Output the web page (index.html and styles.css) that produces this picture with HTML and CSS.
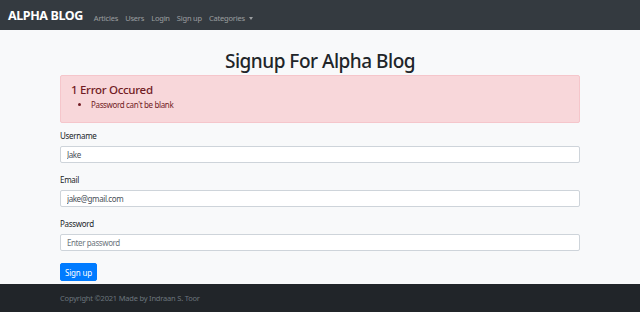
FILE: index.html
```html
<!DOCTYPE html>
<html lang="en">
<head>
<meta charset="utf-8">
<title>Signup For Alpha Blog</title>
<link rel="stylesheet" href="styles.css">
</head>
<body>
<nav class="navbar">
  <a class="brand" href="#">ALPHA BLOG</a>
  <ul class="nav-links">
    <li><a href="#">Articles</a></li>
    <li><a href="#">Users</a></li>
    <li><a href="#">Login</a></li>
    <li><a href="#">Sign up</a></li>
    <li><a href="#" class="dropdown">Categories <span class="caret"></span></a></li>
  </ul>
</nav>
<main class="main">
  <h1 class="title">Signup For Alpha Blog</h1>
  <div class="container">
    <div class="alert">
      <h4 class="alert-heading">1 Error Occured</h4>
      <ul class="errors">
        <li>Password can't be blank</li>
      </ul>
    </div>
    <form class="form">
      <div class="group">
        <label for="u">Username</label>
        <input id="u" type="text" value="Jake">
      </div>
      <div class="group">
        <label for="e">Email</label>
        <input id="e" type="email" value="jake@gmail.com">
      </div>
      <div class="group">
        <label for="p">Password</label>
        <input id="p" type="password" placeholder="Enter password">
      </div>
      <button type="button" class="btn">Sign up</button>
    </form>
  </div>
</main>
<footer class="footer">
  <div class="container">Copyright ©2021 Made by Indraan S. Toor</div>
</footer>
</body>
</html>
```
FILE: styles.css
```css
* { box-sizing: border-box; }
html, body { margin: 0; padding: 0; }
body {
  background: #f8f9fa;
  font-family: "Noto Sans", "Open Sans", sans-serif;
  color: #212529;
  height: 312px;
  display: flex;
  flex-direction: column;
}
a { text-decoration: none; }

.navbar {
  background: #343a40;
  height: 30px;
  display: flex;
  align-items: center;
  padding: 0 8px;
}
.brand {
  color: #fff;
  font-weight: 700;
  font-size: 12.5px;
  letter-spacing: -0.4px;
  margin-right: 11px;
}
.nav-links {
  list-style: none;
  margin: 0;
  padding: 0;
  display: flex;
  gap: 7px;
}
.nav-links a {
  color: rgba(255, 255, 255, 0.5);
  font-size: 7.5px;
  letter-spacing: -0.2px;
}
.caret {
  display: inline-block;
  width: 0;
  height: 0;
  margin-left: 2px;
  vertical-align: 1px;
  border-top: 3px solid rgba(255, 255, 255, 0.5);
  border-left: 2.5px solid transparent;
  border-right: 2.5px solid transparent;
}

.main { flex: 1; }
.title {
  margin: 18px 0 1px;
  text-align: center;
  font-size: 19px;
  line-height: 26px;
  font-weight: 500;
  letter-spacing: -0.5px;
}
.container {
  width: 520px;
  margin: 0 auto;
}
.alert {
  background: #f8d7da;
  border: 1px solid #f5c6cb;
  border-radius: 2px;
  color: #721c24;
  height: 48px;
  padding: 6px 10px;
}
.alert-heading {
  margin: 0 0 2px;
  font-size: 11.5px;
  line-height: 15px;
  font-weight: 500;
  letter-spacing: -0.3px;
}
.errors {
  margin: 0;
  padding-left: 20px;
  font-size: 8px;
  line-height: 11px;
  letter-spacing: -0.35px;
}

.form {
  margin-top: 8px;
  display: flex;
  flex-direction: column;
  align-items: flex-start;
}
.group {
  width: 100%;
  margin-bottom: 12px;
  display: flex;
  flex-direction: column;
}
.group label {
  font-size: 8px;
  line-height: 10px;
  margin-bottom: 5px;
  letter-spacing: -0.3px;
}
.group input {
  height: 17px;
  width: 100%;
  border: 1px solid #ced4da;
  border-radius: 2px;
  background: #fff;
  padding: 0 6px;
  font-family: inherit;
  font-size: 8px;
  letter-spacing: -0.4px;
  color: #495057;
}
.group input::placeholder { color: #6c757d; }
.btn {
  height: 18px;
  width: 37px;
  padding: 0;
  background: #007bff;
  border: 1px solid #007bff;
  border-radius: 2px;
  color: #fff;
  font-family: inherit;
  font-size: 8px;
  letter-spacing: -0.2px;
}

.footer {
  background: #212529;
  height: 28px;
  display: flex;
  align-items: center;
  color: #6c757d;
  font-size: 7.5px;
  letter-spacing: -0.2px;
}
```
